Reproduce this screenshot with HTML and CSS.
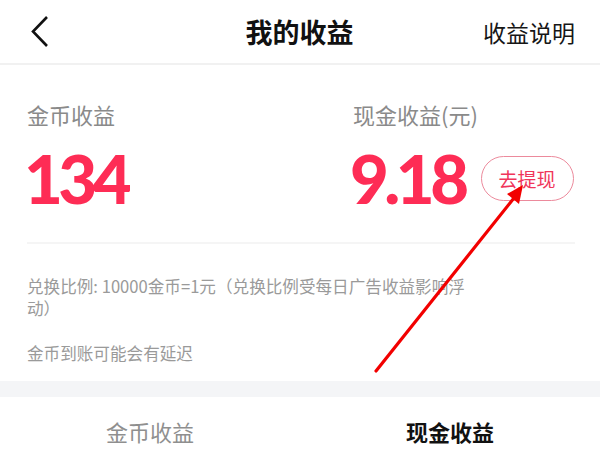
FILE: index.html
```html
<!DOCTYPE html>
<html lang="zh-CN">
<head>
    <meta charset="UTF-8">
    <meta name="viewport" content="width=device-width, initial-scale=1.0">
    <title>我的收益</title>
    <link rel="stylesheet" href="styles.css">
</head>
<body>
    <div class="page">
        <div class="header">
            <svg class="back" width="20" height="34" viewBox="0 0 20 34">
                <path d="M17 2 L3 16.5 L17 31" fill="none" stroke="#111" stroke-width="2.6"/>
            </svg>
            <h1>我的收益</h1>
            <span class="explain">收益说明</span>
        </div>

        <div class="income">
            <div class="stats">
                <div class="stat">
                    <div class="label">金币收益</div>
                    <div class="amount-row">
                        <span class="amount">134</span>
                    </div>
                </div>
                <div class="stat">
                    <div class="label">现金收益(元)</div>
                    <div class="amount-row">
                        <span class="amount">9.18</span>
                        <button type="button" class="withdraw">去提现</button>
                    </div>
                </div>
            </div>
            <div class="notes">
                <p class="note">兑换比例: 10000金币=1元（兑换比例受每日广告收益影响浮动）</p>
                <p class="note">金币到账可能会有延迟</p>
            </div>
        </div>

        <div class="band"></div>

        <div class="tabs">
            <div class="tab">金币收益</div>
            <div class="tab active">现金收益</div>
        </div>

        <!-- red annotation arrow drawn over the screenshot -->
        <svg class="arrow" width="600" height="450" viewBox="0 0 600 450">
            <line x1="376" y1="371" x2="514" y2="198" stroke="#f20000" stroke-width="3.2" stroke-linecap="round"/>
            <polygon points="523,185 507,194 519,204" fill="#f20000"/>
        </svg>
    </div>
</body>
</html>
```
FILE: styles.css
```css
* {
    box-sizing: border-box;
}
body {
    margin: 0;
    background-color: #fff;
    font-family: "Noto Sans CJK SC", "Noto Sans", sans-serif;
}
.page {
    position: relative;
    width: 600px;
    height: 450px;
    overflow: hidden;
}
.header {
    height: 65px;
    display: flex;
    align-items: center;
    justify-content: space-between;
    padding: 0 25px 0 30px;
    border-bottom: 2px solid #f1f1f1;
}
.back {
    display: block;
}
h1 {
    margin: 0 0 0 66px;
    font-size: 27px;
    font-weight: 700;
    color: #111;
}
.explain {
    font-size: 23px;
    color: #161616;
}
.income {
    padding: 0 25px 0 27px;
}
.stats {
    display: grid;
    grid-template-columns: 326px 1fr;
    padding-top: 34px;
    height: 179px;
    border-bottom: 2px solid #f5f5f5;
}
.label {
    font-size: 22px;
    line-height: 30px;
    color: #8a8a8a;
}
.amount-row {
    display: flex;
    align-items: center;
    gap: 16px;
    margin-top: 15px;
}
.amount {
    margin-left: -3px;
    font-family: "Lato", "Liberation Sans", sans-serif;
    font-weight: 900;
    font-size: 67px;
    line-height: 68px;
    letter-spacing: -4.5px;
    color: #fe2c55;
}
.withdraw {
    height: 45px;
    width: 93px;
    padding: 0;
    border: 1.5px solid #ec8a9c;
    border-radius: 23px;
    background-color: #fff;
    color: #f0355a;
    font-family: inherit;
    font-size: 19px;
}
.notes {
    padding: 31px 0 17px;
    width: 452px;
}
.note {
    margin: 0 0 23px;
    font-size: 16.6px;
    line-height: 22px;
    color: #9a9a9a;
}
.note:last-child {
    margin-bottom: 0;
}
.band {
    height: 16px;
    background-color: #f4f5f7;
}
.tabs {
    display: flex;
    height: 53px;
    padding-top: 19px;
}
.tab {
    flex: 1;
    text-align: center;
    font-size: 22px;
    line-height: 30px;
    color: #8f8f8f;
}
.tab.active {
    font-weight: 700;
    color: #111;
}
.arrow {
    position: absolute;
    left: 0;
    top: 0;
    pointer-events: none;
}
```
